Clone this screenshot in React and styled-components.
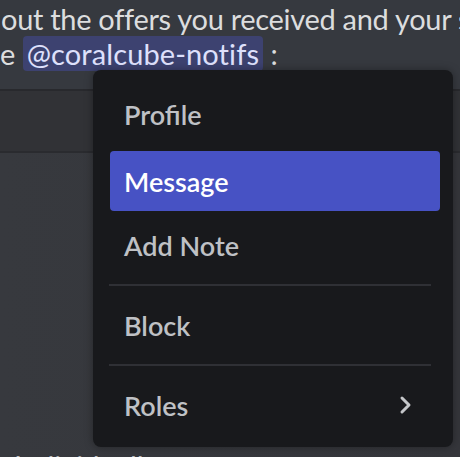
import styled, { createGlobalStyle } from 'styled-components';

const GlobalStyle = createGlobalStyle`
	html, body {
		margin: 0;
		padding: 0;
		background: #36393f;
		overflow: hidden;
	}
	* {
		box-sizing: border-box;
	}
`;

const Page = styled.div`
	position: relative;
	width: 460px;
	height: 457px;
	overflow: hidden;
	background: #36393f;
	font-family: Lato, 'Noto Sans', sans-serif;
`;

const MessageText = styled.div`
	padding-top: 1px;
	color: #dcddde;
	font-size: 29px;
	line-height: 35px;
	white-space: nowrap;
`;

const Line = styled.div`
	padding-left: ${(p) => p.$indent || 0}px;
	letter-spacing: ${(p) => p.$tight || 0}px;
`;

const Mention = styled.span`
	background: #3d4270;
	color: #dee0fc;
	border-radius: 4px;
	padding: 0 4px;
	letter-spacing: 0.1px;
`;

const Band = styled.div`
	margin-top: 18px;
	height: 64px;
	background: #313236;
	border-top: 2px solid #28292d;
	border-bottom: 2px solid #2a2b2f;
`;

const Body = styled.div`
	height: 305px;
	background: linear-gradient(90deg, #37393e 0%, #35363b 100%);
	padding-top: 295px;
	padding-left: 14px;
	color: #b9bbbe;
	font-size: 29px;
	line-height: 35px;
	white-space: nowrap;
`;

const Menu = styled.div`
	position: absolute;
	left: 93px;
	top: 70px;
	width: 360px;
	height: 377px;
	background: #18191c;
	border-radius: 8px;
	padding: 14px 13px 12px 17px;
	box-shadow: 0 0 8px rgba(0, 0, 0, 0.35);
	display: flex;
	flex-direction: column;
`;

const Item = styled.div`
	height: 60px;
	margin-top: ${(p) => p.$top || 0}px;
	display: flex;
	align-items: center;
	justify-content: space-between;
	padding: 0 28px 0 14px;
	border-radius: 4px;
	background: ${(p) => (p.$active ? '#4752c4' : 'transparent')};
	color: ${(p) => (p.$active ? '#ffffff' : '#bfc1c5')};
	font-size: 27px;
	font-weight: 600;
`;

const Separator = styled.div`
	height: 2px;
	margin: 9px 9px 9px -1px;
	background: #2f3035;
`;

const Chevron = () => (
	<svg width="14" height="20" viewBox="0 0 14 20">
		<path d="M4 3 L11 10 L4 17" fill="none" stroke="#c4c6c9" strokeWidth="3" strokeLinecap="round" strokeLinejoin="round" />
	</svg>
);

export default function App() {
	return (
		<Page>
			<GlobalStyle />
			<MessageText>
				<Line $indent={1} $tight={-0.3}>out the offers you received and your sales</Line>
				<Line>
					e <Mention>@coralcube-notifs</Mention> :
				</Line>
			</MessageText>
			<Band />
			<Body>Individually</Body>
			<Menu>
				<Item>Profile</Item>
				<Item $active $top={7}>Message</Item>
				<Item $top={4}>Add Note</Item>
				<Separator />
				<Item>Block</Item>
				<Separator />
				<Item>
					Roles
					<Chevron />
				</Item>
			</Menu>
		</Page>
	);
}
